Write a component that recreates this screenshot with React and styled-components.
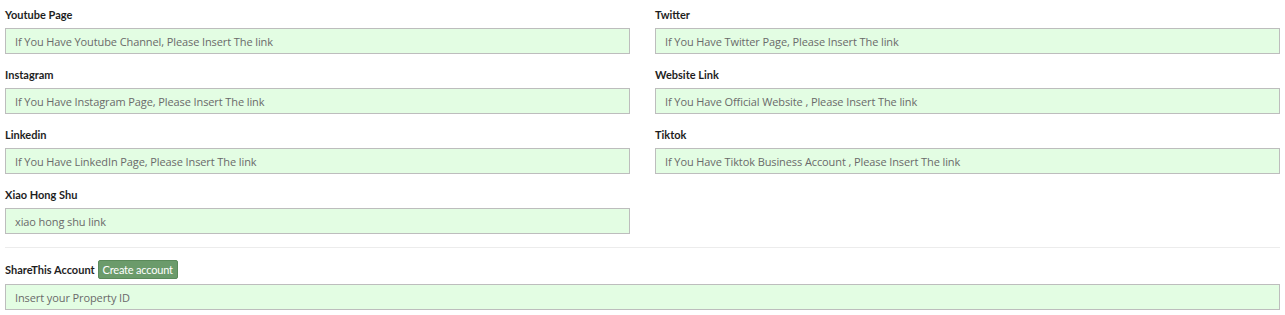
import styled, { createGlobalStyle } from 'styled-components'

const Global = createGlobalStyle`
  body { margin: 0; background: #fff; }
  * { box-sizing: border-box; }
`

const Form = styled.div`
  padding: 4px 5px 0;
  font-family: Lato, 'Open Sans', sans-serif;
`

const Grid = styled.div`
  display: grid;
  grid-template-columns: 1fr 1fr;
  column-gap: 25px;
  row-gap: 10px;
`

const Field = styled.div`
  display: flex;
  flex-direction: column;
`

const Label = styled.label`
  display: flex;
  align-items: ${({ $top }) => ($top ? 'flex-start' : 'center')};
  gap: 3px;
  height: 20px;
  line-height: ${({ $top }) => ($top ? '19px' : 'normal')};
  margin-bottom: 4px;
  font-size: 11px;
  font-weight: 700;
  color: #1e1e1e;
`

const Input = styled.input`
  height: 26px;
  width: 100%;
  padding: 0 9px;
  border: 1px solid #bdbdbd;
  background: #e3fde3;
  font-family: 'Open Sans', sans-serif;
  font-size: 11px;
  letter-spacing: -0.1px;
  color: #333;
  outline: none;
  &::placeholder { color: #6a6a6a; }
`

const Divider = styled.hr`
  border: 0;
  border-top: 1px solid #ececec;
  margin: 13px 0 12px;
`

const Button = styled.button`
  height: 19px;
  padding: 0 4px;
  border: 1px solid #5a8a5a;
  border-radius: 2px;
  background: #6b9b6b;
  color: #fff;
  font-family: Lato, sans-serif;
  font-size: 11px;
  font-weight: 400;
  letter-spacing: -0.2px;
  line-height: 17px;
  cursor: pointer;
`

const fields = [
  ['Youtube Page', 'If You Have Youtube Channel, Please Insert The link'],
  ['Twitter', 'If You Have Twitter Page, Please Insert The link'],
  ['Instagram', 'If You Have Instagram Page, Please Insert The link'],
  ['Website Link', 'If You Have Official Website , Please Insert The link'],
  ['Linkedin', 'If You Have LinkedIn Page, Please Insert The link'],
  ['Tiktok', 'If You Have Tiktok Business Account , Please Insert The link'],
  ['Xiao Hong Shu', 'xiao hong shu link']
]

const App = () => {
  return (
    <>
      <Global />
      <Form>
        <Grid>
          {fields.map(([label, ph]) => (
            <Field key={label}>
              <Label>{label}</Label>
              <Input placeholder={ph} />
            </Field>
          ))}
        </Grid>
        <Divider />
        <Field>
          <Label $top>
            ShareThis Account <Button>Create account</Button>
          </Label>
          <Input placeholder='Insert your Property ID' />
        </Field>
      </Form>
    </>
  )
}

export default App
